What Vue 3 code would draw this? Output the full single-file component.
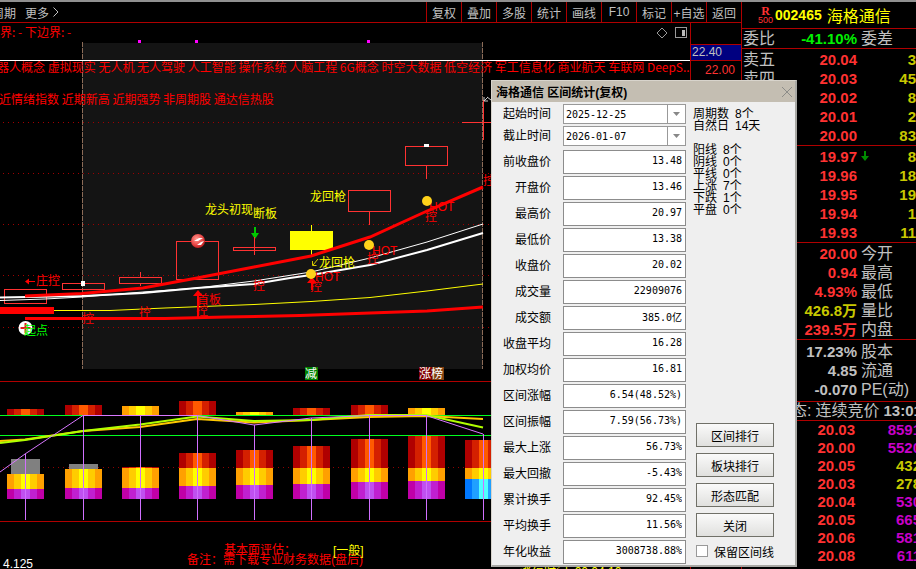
<script setup>
import { ref } from 'vue'

const tools = ['复权', '叠加', '多股', '统计', '画线', 'F10', '标记', '+自选', '返回']

const startDate = ref('2025-12-25')
const endDate = ref('2026-01-07')
const keepLines = ref(false)

const fields = [
  ['前收盘价', '13.48'], ['开盘价', '13.46'], ['最高价', '20.97'], ['最低价', '13.38'],
  ['收盘价', '20.02'], ['成交量', '22909076'], ['成交额', '385.0亿'], ['收盘平均', '16.28'],
  ['加权均价', '16.81'], ['区间涨幅', '6.54(48.52%)'], ['区间振幅', '7.59(56.73%)'],
  ['最大上涨', '56.73%'], ['最大回撤', '-5.43%'], ['累计换手', '92.45%'],
  ['平均换手', '11.56%'], ['年化收益', '3008738.88%'],
]
const spans = [['周期数', '8个'], ['自然日', '14天']]
const counts = [['阳线', '8个'], ['阴线', '0个'], ['平线', '0个'], ['上涨', '7个'], ['下跌', '1个'], ['平盘', '0个']]
const actions = ['区间排行', '板块排行', '形态匹配', '关闭']

const sells = [['卖五', '20.04', '3'], ['卖四', '20.03', '45'], ['卖三', '20.02', '8'], ['卖二', '20.01', '2'], ['卖一', '20.00', '83']]
const buys = [['买一', '19.97', '8'], ['买二', '19.96', '18'], ['买三', '19.95', '19'], ['买四', '19.94', '1'], ['买五', '19.93', '11']]
const quotes = [['20.00', '今开', 'red'], ['0.94', '最高', 'red'], ['4.93%', '最低', 'red'], ['426.8万', '量比', 'yellow'], ['239.5万', '内盘', 'red']]
const basics = [['17.23%', '股本'], ['4.85', '流通'], ['-0.070', 'PE(动)']]
const ticks = [
  ['20.03', '8591', 'violet'], ['20.00', '5520', 'violet'], ['20.05', '432', 'yellow'], ['20.03', '278', 'yellow'],
  ['20.04', '530', 'violet'], ['20.05', '665', 'violet'], ['20.06', '581', 'violet'], ['20.08', '611', 'violet'],
]

const gridLines = [122, 173, 224, 275, 327]
const candles = [
  { x: 4, y: 289, h: 14 }, { x: 62, y: 283, h: 6 }, { x: 119, y: 277, h: 6, up: 272, down: 286 },
  { x: 176, y: 241, h: 38 }, { x: 233, y: 247, h: 3, up: 237, down: 255 },
  { x: 348, y: 190, h: 21, down: 225 }, { x: 405, y: 146, h: 19, down: 179 },
]
const holds = [[82, 323], [139, 317], [196, 315], [253, 290], [310, 291], [367, 263], [425, 221], [483, 185]]
const hots = [[315, 281], [372, 255], [429, 211]]
const balls = [[311, 274], [369, 245], [427, 201]]

const palettes = {
  red: ['#b00000', '#d42000', '#ff5a00', '#d42000', '#b00000'],
  yellow: ['#ffa000', '#ffcc00', '#ffff00', '#ffcc00', '#ffa000'],
  purple: ['#c000a8', '#c020d0', '#c050f0', '#c020d0', '#c000a8'],
  blue: ['#0078ff', '#20a0ff', '#50ffff', '#20a0ff', '#0078ff'],
}
const stripes = [[0, 7], [7, 7], [14, 9], [23, 7], [30, 7]]
const block = (x, top, bottom, color) => ({ x, y: top, h: bottom - top, colors: palettes[color] })
const days = [
  { x: 7, cap: 409, tint: 'red', mid: 474, low: 489, stem: 454 },
  { x: 65, cap: 405, tint: 'red', mid: 469, low: 488, stem: 415 },
  { x: 122, cap: 406, tint: 'yellow', top: 467, mid: 468, low: 488, stem: 415 },
  { x: 179, cap: 401, tint: 'red', top: 453, mid: 468, low: 486, stem: 415 },
  { x: 236, cap: 412, tint: 'yellow', top: 450, mid: 468, low: 485, stem: 425 },
  { x: 293, cap: 408, tint: 'red', top: 446, mid: 468, low: 484, stem: 418 },
  { x: 351, cap: 405, tint: 'red', top: 439, mid: 468, low: 482, stem: 415 },
  { x: 408, cap: 408, tint: 'yellow', top: 436, mid: 468, low: 481, stem: 415 },
  { x: 465, top: 440, mid: 468, low: 479, stem: 434, base: 'blue' },
]
const blocks = days.flatMap((d) => [
  ...(d.cap ? [block(d.x, d.cap, 415, d.tint)] : []),
  ...(d.top ? [block(d.x, d.top, d.mid, 'red')] : []),
  block(d.x, d.mid, d.low, 'yellow'),
  block(d.x, d.low, 499, d.base || 'purple'),
])
</script>

<template>
  <main class="app">
    <section class="main">
      <nav class="toolbar">
        <a href="#" class="period">周期</a>
        <a href="#" class="more">更多
          <svg width="6" height="10" viewBox="0 0 6 10"><path d="M.5.5 5 5 .5 9.500" fill="none" stroke="#c0c0c0" /></svg>
        </a>
        <div class="tools">
          <button v-for="t in tools" :key="t" type="button">{{ t }}</button>
        </div>
      </nav>
      <div class="body">
        <svg class="chart">
          <defs>
            <radialGradient id="ball" cx="40%" cy="35%" r="70%">
              <stop offset="0" stop-color="#ff9a90" /><stop offset="0.6" stop-color="#e84848" /><stop offset="1" stop-color="#b01818" />
            </radialGradient>
          </defs>
          <g transform="translate(0 -23)">
            <rect x="82" y="43" width="401" height="326" fill="#141414" />
            <g shape-rendering="crispEdges" fill="none">
              <path v-for="y in gridLines" :key="y" :d="`M3 ${y + 0.5}H691`" stroke="#a00000" stroke-dasharray="1 4" />
              <path d="M3 467.500H691" stroke="#900000" stroke-dasharray="1 4" />
              <path d="M82.500 42V369M482.500 42V369" stroke="#8c6c58" stroke-dasharray="5 1" />
              <path d="M0 381.500H760M0 521.500H760" stroke="#b00000" />
            </g>
            <g fill="#f0f">
              <rect x="138" y="40" width="3" height="3" /><rect x="195" y="40" width="3" height="3" /><rect x="367" y="40" width="3" height="3" />
            </g>
            <g class="red themes">
              <text x="-12" y="37">边界: - 下边界: -</text>
              <text x="-3" y="72">器人概念 虚拟现实 无人机 无人驾驶 人工智能 操作系统 人脑工程 6G概念 时空大数据 低空经济 军工信息化 商业航天 车联网 DeepS..</text>
              <text x="-1" y="104">近情绪指数 近期新高 近期强势 非周期股 通达信热股</text>
            </g>
            <path d="M0 60.500H760" stroke="#fff" />
            <g fill="none" stroke="#999">
              <path d="M662 28l5 5-5 5-5-5z" />
              <rect x="675.500" y="27.500" width="11" height="10" />
              <rect x="682" y="30" width="3" height="6" fill="#bbb" stroke="none" />
            </g>

            <g fill="none" stroke="#ff3232" shape-rendering="crispEdges">
              <template v-for="c in candles" :key="c.x">
                <rect :x="c.x + 0.5" :y="c.y + 0.5" width="42" :height="c.h" />
                <path v-if="c.up" :d="`M${c.x + 21.5} ${c.up}V${c.y}`" />
                <path v-if="c.down" :d="`M${c.x + 21.5} ${c.y + c.h}V${c.down}`" />
              </template>
              <path d="M483.500 100V140M462 122.500H492" />
            </g>
            <path d="M311.500 225V256" stroke="#ff0" />
            <rect x="290" y="231" width="43" height="19" fill="#ff0" />
            <path d="M424 144h5v3h-5zM81 281h4v5h-4z" fill="#fff" />

            <g fill="none">
              <path d="M0 297.500 82 296 143 293 197 288 254 284 290 278 311 275 370 265 427 250 483 233" stroke="#fff" stroke-width="2" />
              <path d="M0 300.500 45 299 82 297 143 292 197 288 254 281 311 272 370 258 427 242 483 224" stroke="#fff" />
              <path d="M54 310.500 110 310.500 165 308 254 304.500 311 301.500 370 297.500 427 291 483 284" stroke="#ff0" />
              <path d="M0 310.500H54" stroke="#f00" stroke-width="7" />
              <path d="M25 296 82 293.500 143 288 197 278 254 267 311 256 370 237 427 211 483 187" stroke="#f00" stroke-width="3" />
              <path d="M25 318.500 165 318.500 225 317 300 315.500 370 313 427 311 483 307" stroke="#f00" stroke-width="3" />
            </g>

            <circle cx="198" cy="241" r="7" fill="url(#ball)" />
            <path d="M194 241l5-3h4l-5 3zM197 245l4-3 3-1-3 4z" fill="#fff" />
            <circle cx="25.500" cy="328" r="7" fill="#fff" />
            <path d="M25.500 323v10M20.500 328h10" stroke="#e02020" stroke-width="2" />
            <path d="M254 227h2v6h3l-4 6-4-6h3z" fill="#00c800" />
            <path d="M254.500 237V255" stroke="#ff3232" />
            <g fill="#f00">
              <path d="M198 290l5 6h-4v22h-2v-22h-4zM312 277l5 6h-4v7h-2v-7h-4z" />
              <text v-for="h in holds" :key="h[0]" :x="h[0]" :y="h[1]">控</text>
              <text v-for="h in hots" :key="h[0]" :x="h[0]" :y="h[1]">HOT</text>
              <text x="197" y="304">首板</text>
              <text x="36" y="285">庄控</text>
              <path d="M26 281h9v1h-9zM25 281.500l4-3v6z" />
            </g>
            <circle v-for="b in balls" :key="b[0]" :cx="b[0]" :cy="b[1]" r="5" fill="#ffd21a" />
            <text x="24" y="335" fill="#0f0">起点</text>
            <g fill="#ff0">
              <text x="205" y="214">龙头初现</text>
              <text x="253" y="218">断板</text>
              <text x="310" y="201">龙回枪</text>
              <text x="319" y="267">龙回枪</text>
            </g>
            <path d="M318 259l-5 6M312.500 261v4.500h4" fill="none" stroke="#d8c800" />
            <rect x="305" y="367" width="13" height="13" fill="#008000" />
            <rect x="419" y="367" width="13" height="13" fill="#800000" />
            <rect x="432" y="367" width="12" height="13" fill="#804010" />
            <g fill="#fff">
              <text x="305" y="378">减</text><text x="419" y="378">涨</text><text x="431" y="378">榜</text>
            </g>
            <path d="M484 101l4-4M484 97v4h4M487 97l4 3" fill="none" stroke="#ccc" />

            <g shape-rendering="crispEdges">
              <rect x="11" y="459" width="29" height="15" fill="#808080" />
              <rect x="69" y="464" width="29" height="5" fill="#808080" />
              <template v-for="(b, i) in blocks" :key="i">
                <rect v-for="(s, n) in stripes" :key="n" :x="b.x + s[0]" :y="b.y" :width="s[1]" :height="b.h" :fill="b.colors[n]" />
              </template>
              <path d="M0 415.500H691M0 435.500H691" stroke="#00ff20" />
            </g>
            <g fill="none">
              <path d="M0 441 25 439.500 83 431 140 427 197 419 254 422.500 311 420 369 417 426 416 483 419" stroke="#ffc800" stroke-width="2" />
              <path d="M0 443 25 440 83 431 140 424.500 197 416.500 254 421 311 420 369 415 426 415 483 427.500" stroke="#b0ff00" stroke-width="2" />
              <path d="M0 472 25 454 83 415.500 197 415.500 254 425 311 418 369 415.500 426 415.500 483 434" stroke="#d878ff" />
              <path v-for="d in days" :key="d.x" :d="`M${d.x + 18.5} ${d.stem}V520`" stroke="#d070ff" />
            </g>
            <g class="red">
              <text x="224" y="554">基本面评估：</text>
              <text x="187" y="564">备注：需下载专业财务数据(盘后)</text>
            </g>
            <text x="333" y="555" fill="#ff0">[一般]</text>
            <text x="3" y="568" fill="#fff">4.125</text>
            <text x="520" y="576" fill="#ff0">涨停时间: 00:04:10</text>
          </g>
        </svg>
        <aside class="axis">
          <span class="high">22.40</span>
          <span class="step">22.00</span>
        </aside>
      </div>
    </section>

    <section class="side">
      <header class="stock">
        <span class="badge"><b>R</b><span>500</span></span>
        <b>002465</b>
        <span class="name">海格通信</span>
      </header>
      <table class="rule">
        <tbody><tr><th>委比</th><td class="num green">-41.10%</td><td class="tag" colspan="2">委差</td></tr></tbody>
      </table>
      <table class="rule book">
        <tbody>
          <tr v-for="r in sells" :key="r[0]"><th>{{ r[0] }}</th><td class="num red">{{ r[1] }}</td><td class="mark"></td><td class="num yellow">{{ r[2] }}</td></tr>
        </tbody>
      </table>
      <table class="rule book">
        <tbody>
          <tr v-for="(r, i) in buys" :key="r[0]">
            <th>{{ r[0] }}</th><td class="num red">{{ r[1] }}</td>
            <td class="mark"><svg v-if="i === 0" width="8" height="10" viewBox="0 0 8 10"><path d="M3 0h2v5h3L4 10 0 5h3z" fill="#008c00" /></svg></td>
            <td class="num yellow">{{ r[2] }}</td>
          </tr>
        </tbody>
      </table>
      <table class="rule book">
        <tbody>
          <tr v-for="r in quotes" :key="r[1]"><th></th><td class="num" :class="r[2]">{{ r[0] }}</td><td class="tag" colspan="2">{{ r[1] }}</td></tr>
        </tbody>
      </table>
      <table class="rule basics">
        <tbody>
          <tr v-for="r in basics" :key="r[1]"><th></th><td class="num">{{ r[0] }}</td><td class="tag" colspan="2">{{ r[1] }}</td></tr>
        </tbody>
      </table>
      <div class="rule status"><span>状态:</span><span>连续竞价</span><b>13:01</b></div>
      <table class="ticks">
        <tbody>
          <tr v-for="(r, i) in ticks" :key="i"><td class="num red">{{ r[0] }}</td><td class="num" :class="r[2]">{{ r[1] }}</td></tr>
        </tbody>
      </table>
    </section>

    <form class="dialog" role="dialog" aria-labelledby="dialog-title" @submit.prevent>
      <header class="title">
        <h1 id="dialog-title">海格通信 区间统计(复权)</h1>
        <button type="button" aria-label="关闭窗口">
          <svg width="12" height="12" viewBox="0 0 12 12"><path d="M1 1l10 10M11 1 1 11" stroke="#8c8c88" /></svg>
        </button>
      </header>
      <div class="content">
        <div class="fields">
          <div class="row combo">
            <label for="start">起始时间</label>
            <span class="pick">
              <select id="start" v-model="startDate"><option>2025-12-25</option></select>
              <svg width="18" height="18" viewBox="0 0 18 18"><path d="M.5 0v18" stroke="#999" /><path d="M6 7h7l-3.500 4z" fill="#888" /></svg>
            </span>
          </div>
          <div class="row combo">
            <label for="end">截止时间</label>
            <span class="pick">
              <select id="end" v-model="endDate"><option>2026-01-07</option></select>
              <svg width="18" height="18" viewBox="0 0 18 18"><path d="M.5 0v18" stroke="#999" /><path d="M6 7h7l-3.500 4z" fill="#888" /></svg>
            </span>
          </div>
          <div class="values">
            <div v-for="(f, i) in fields" :key="f[0]" class="row">
              <label :for="'field' + i">{{ f[0] }}</label>
              <input :id="'field' + i" type="text" readonly :value="f[1]" />
            </div>
          </div>
        </div>
        <div class="info">
          <dl><div v-for="s in spans" :key="s[0]"><dt>{{ s[0] }}</dt><dd>{{ s[1] }}</dd></div></dl>
          <dl><div v-for="s in counts" :key="s[0]"><dt>{{ s[0] }}</dt><dd>{{ s[1] }}</dd></div></dl>
          <div class="actions">
            <button v-for="a in actions" :key="a" type="button">{{ a }}</button>
            <label class="keep"><input v-model="keepLines" type="checkbox" />保留区间线</label>
          </div>
        </div>
      </div>
    </form>
  </main>
</template>

<style>
body {
  background: #000;
}
</style>

<style scoped>
.app {
  position: relative;
  display: grid;
  grid-template-columns: minmax(0, 1fr) 174px;
  min-height: 100vh;
  box-sizing: border-box;
  border-top: 2px solid #909090;
  overflow: hidden;
  background: #000;
  color: #c0c0c0;
  font: 12px "Liberation Sans", "Noto Sans CJK SC", sans-serif;
}
.main {
  display: flex;
  flex-direction: column;
  min-width: 0;
  border-right: 1px solid #b00000;
}
.toolbar {
  display: flex;
  align-items: center;
  height: 20px;
  border-bottom: 1px solid #b00000;
  white-space: nowrap;
}
.toolbar a {
  color: #c0c0c0;
  text-decoration: none;
}
.period {
  margin-left: -8px;
}
.more {
  display: flex;
  align-items: center;
  gap: 4px;
  margin-left: 9px;
}
.tools {
  display: flex;
  height: 100%;
  margin-left: auto;
}
.tools button {
  width: 35px;
  padding: 0;
  border: 0;
  border-left: 1px solid #b00000;
  background: none;
  color: #c0c0c0;
  font: inherit;
  white-space: nowrap;
}
.body {
  display: flex;
}
.chart {
  flex: 1;
  min-width: 0;
  height: 546px;
  overflow: hidden;
}
.themes {
  font-family: "Noto Sans CJK SC", sans-serif;
}
.axis {
  display: flex;
  flex-direction: column;
  width: 51px;
  box-sizing: border-box;
  padding-top: 21px;
  border-left: 1px solid #b00000;
  line-height: 15px;
}
.high {
  padding-left: 1px;
  border-top: 1px solid #b00000;
  border-bottom: 1px solid #b00000;
  background: #000080;
}
.step {
  padding: 2px 6px;
  text-align: right;
  color: #ff3232;
}
.red {
  color: #ff3232;
}
svg .red {
  fill: #f00;
}
.yellow {
  color: #c8c800;
}
.green {
  color: #00f000;
}
.violet {
  color: #c800c8;
}
.side {
  min-width: 0;
  overflow: hidden;
}
.stock {
  display: flex;
  align-items: center;
  gap: 2px;
  height: 26px;
  padding-left: 16px;
  border-bottom: 1px solid #b00000;
  color: #ff0;
  font-size: 14px;
  white-space: nowrap;
}
.badge {
  display: flex;
  flex-direction: column;
  align-items: center;
  width: 15px;
  color: #ff3232;
  font-size: 9px;
  line-height: 9px;
}
.badge b {
  font: bold 12px/10px "Liberation Serif", serif;
}
.name {
  padding-left: 3px;
  font-size: 16px;
}
table {
  width: 100%;
  table-layout: fixed;
  border-collapse: separate;
  border-spacing: 0;
}
.rule {
  border-bottom: 1px solid #b00000;
}
.book {
  padding-top: 1px;
}
.basics {
  padding: 2px 0;
}
tr {
  height: 19px;
}
th,
td {
  padding: 0;
  font-weight: normal;
  line-height: 18px;
  white-space: nowrap;
}
th,
.tag {
  font-size: 16px;
  text-align: left;
}
th {
  width: 32px;
  padding-left: 1px;
}
.tag {
  padding-left: 4px;
}
.num {
  font-size: 15px;
  font-weight: bold;
  text-align: right;
}
th + .num {
  width: 82px;
}
.mark {
  width: 15px;
  padding-left: 4px;
}
.status {
  display: flex;
  gap: 4px;
  padding-left: 33px;
  font-size: 16px;
  line-height: 18px;
  white-space: nowrap;
}
.status b {
  font-size: 15px;
}
.ticks {
  width: 179px;
}
.ticks tr {
  height: 18px;
}
.ticks .num:first-child {
  width: 113px;
}
.dialog {
  position: absolute;
  top: 78px;
  left: 491px;
  width: 306px;
  box-sizing: border-box;
  border: 1px solid #d8d4cc;
  border-right: 2px solid #a8a8a4;
  border-bottom: 2px solid #a8a8a4;
  background: #efefef;
  color: #000;
}
.title {
  display: flex;
  align-items: center;
  justify-content: space-between;
  height: 21px;
  padding: 0 2px 0 4px;
  background: #c4beb2;
}
.title h1 {
  margin: 0;
  font-size: 12px;
  font-weight: bold;
}
.title button {
  display: flex;
  padding: 0;
  border: 0;
  background: none;
}
.content {
  display: flex;
  gap: 7px;
  padding: 2px 0 1px;
}
.fields {
  display: flex;
  flex-direction: column;
  gap: 2px;
}
.row {
  display: grid;
  grid-template-columns: 59px 123px;
  align-items: center;
  column-gap: 12px;
}
.row label {
  text-align: right;
  line-height: 16px;
}
.values {
  display: grid;
  gap: 2px;
  padding-top: 2px;
}
.values input {
  width: 100%;
  height: 24px;
  box-sizing: border-box;
  padding: 0 3px 4px;
  border: 1px solid #8c8c8c;
  background: #fff;
  color: #000;
  font: 10px "DejaVu Sans Mono", "Noto Sans CJK SC", monospace;
  text-align: right;
}
.pick {
  display: flex;
  height: 20px;
  box-sizing: border-box;
  border: 1px solid #999;
  background: #fff;
}
.pick select {
  flex: 1;
  min-width: 0;
  padding: 0 2px;
  border: 0;
  appearance: none;
  background: none;
  color: #000;
  font: 10px "DejaVu Sans Mono", monospace;
}
.info {
  display: flex;
  flex-direction: column;
  gap: 12px;
  padding: 4px 0 7px;
}
dl {
  margin: 0;
  line-height: 12px;
}
dl div {
  display: flex;
  gap: 6px;
}
dd {
  margin: 0;
}
.actions {
  display: grid;
  gap: 6px;
  margin: auto 0 0 3px;
}
.actions button {
  width: 78px;
  height: 24px;
  padding: 0;
  border: 1px solid #707068;
  background: linear-gradient(#fafafa, #e0e0de);
  color: #000;
  font: inherit;
}
.keep {
  display: flex;
  align-items: center;
  gap: 6px;
  height: 12px;
  padding-top: 2px;
  white-space: nowrap;
}
.keep input {
  width: 12px;
  height: 12px;
  margin: 0;
  appearance: none;
  border: 1px solid #999;
  background: #fff;
}
.keep input:checked {
  background: #606060;
}
</style>
